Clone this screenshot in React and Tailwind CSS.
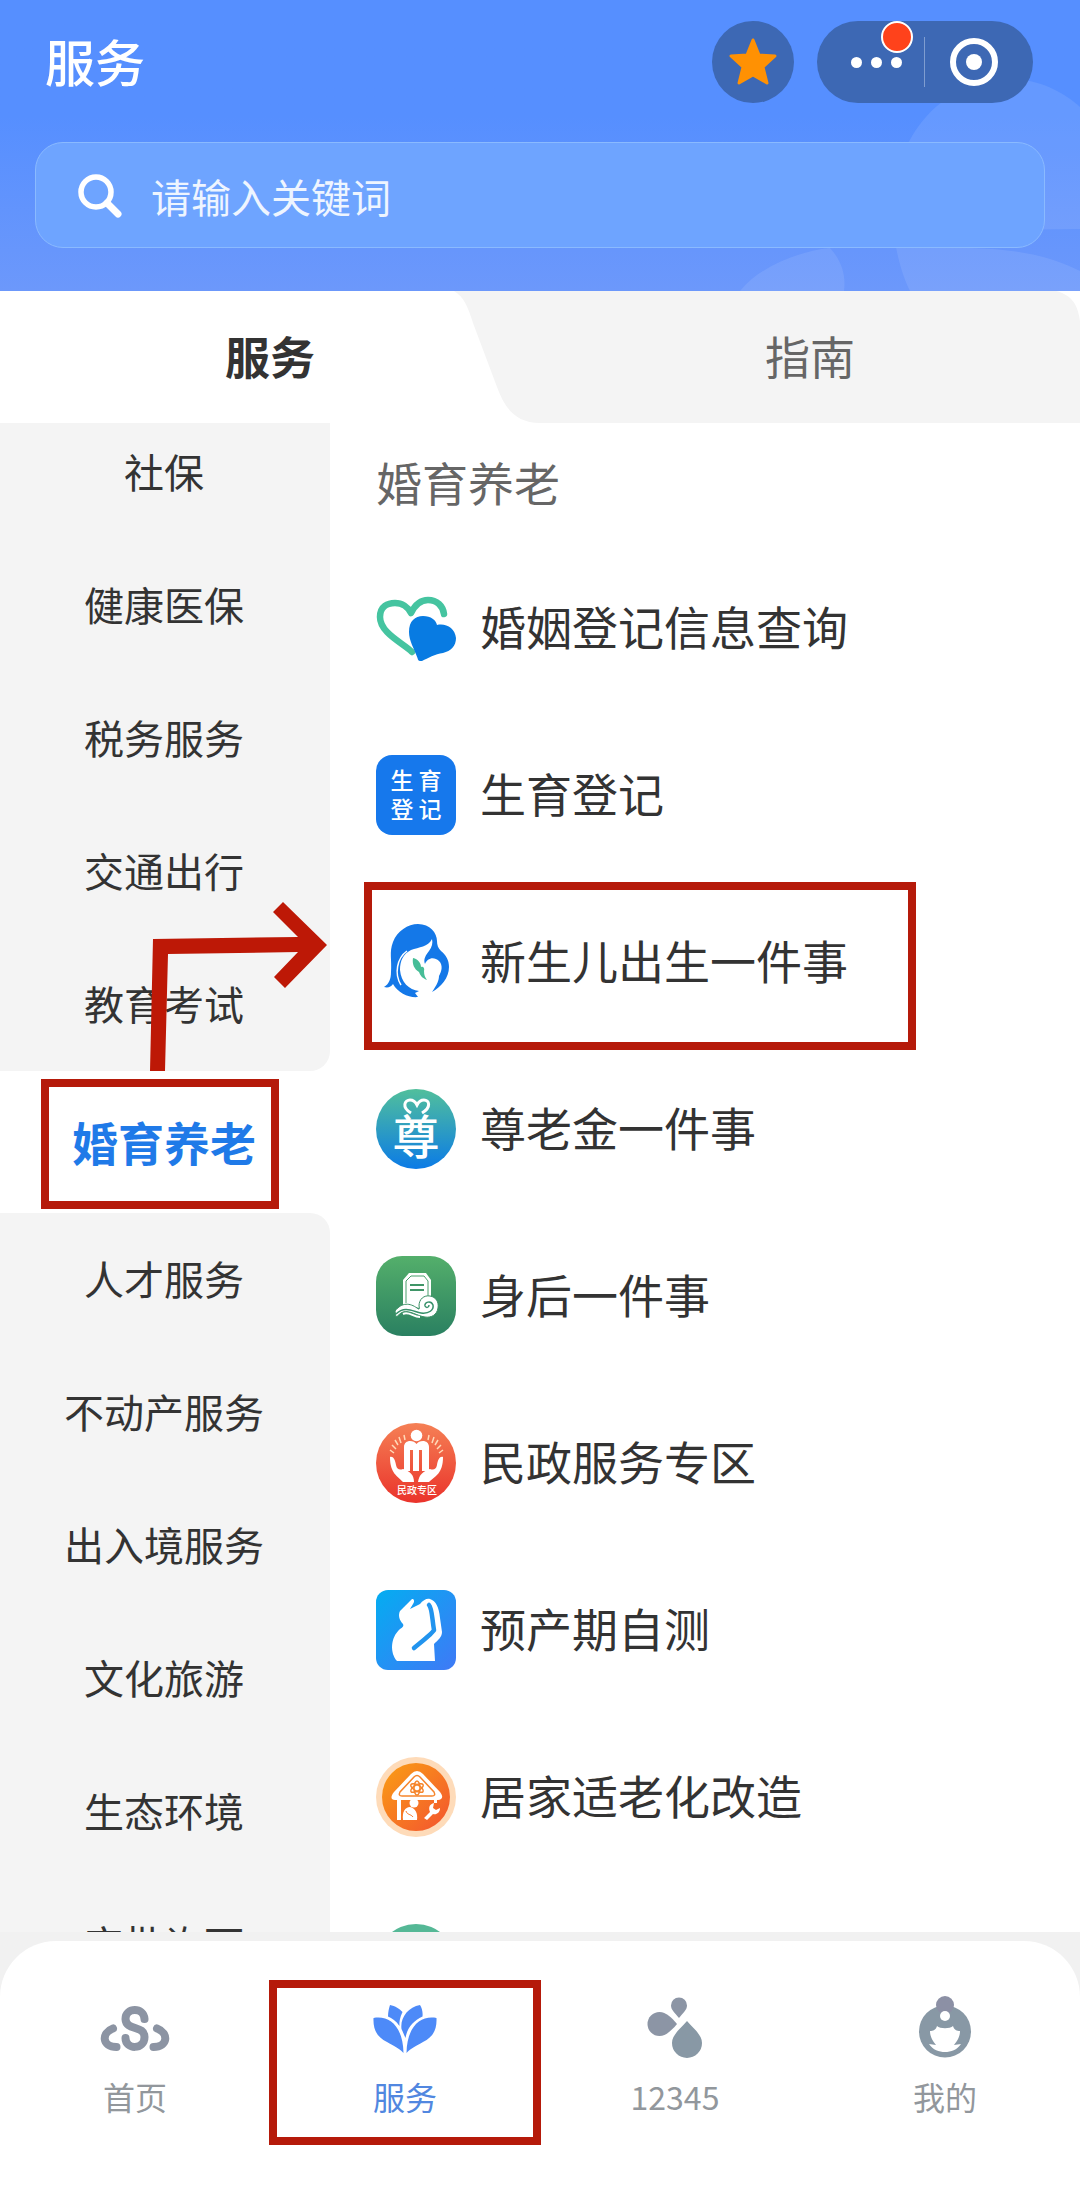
import React, { useState } from 'react';

const categories = [
  '社保',
  '健康医保',
  '税务服务',
  '交通出行',
  '教育考试',
  '婚育养老',
  '人才服务',
  '不动产服务',
  '出入境服务',
  '文化旅游',
  '生态环境',
  '审批许可',
];

const HeartsIcon = () => (
  <svg viewBox="0 0 80 80" className="size-20" fill="none" aria-hidden="true">
    <path
      d="M36 64 C27 55 4 45 4 29 C4 18 12 15 19 15 C26 15 32 19 35 25 C39 17 44 12 52 12 C61 12 67 18 68 26"
      stroke="#45c4a0"
      strokeWidth="6.500"
      strokeLinecap="round"
      strokeLinejoin="round"
    />
    <path
      d="M44 73 Q42 73 41.500 70 C38 60 33 53 33 44 C33 33 39 28 47 28 C55 28 60 32 61 37 C70 35 79 40 80 50 C80 58 75 63 67 65 C59 66 52 70 46 73 Z"
      fill="#087be2"
    />
  </svg>
);

const BirthRegisterIcon = () => (
  <span className="grid size-20 grid-cols-2 place-content-center rounded-2xl bg-[#1678ec] px-3 pb-0.5 text-center text-[23px] leading-[29px] font-medium text-white">
    <span>生</span>
    <span>育</span>
    <span>登</span>
    <span>记</span>
  </span>
);

const MotherIcon = () => (
  <svg viewBox="0 0 80 80" className="size-20" fill="none" aria-hidden="true">
    <path
      d="M42 2 C54 2 61 11 61 19 C61 23 62 26 65 29 C70 33 73 38 73 45 C73 56 65 65 56 70 C61 63 63 58 63 54 C66 49 67 43 63 39 C58 34 51 36 49 42 C47 37 50 33 53 29 C56 25 57 21 56 17 C52 25 43 25 35 28 C27 32 24 39 24 48 C25 60 33 68 43 69 L39 71 L42 75 C33 76 22 71 17 62 C15 65 12 66 8 65 C13 62 15 57 15 50 C16 38 13 30 17 20 C21 9 32 2 42 2 Z"
      fill="#1478e8"
    />
    <path d="M31 29 C21 36 18 52 25 63" stroke="#fff" strokeWidth="1.500" />
    <path
      d="M37 36 C42 37 45 41 45 45 C47 44 49 46 48 49 C48 53 49 55 51 58 C46 56 44 53 43 50 C38 47 36 42 37 36 Z"
      fill="#46bd97"
    />
  </svg>
);

const RespectIcon = () => (
  <svg viewBox="0 0 80 80" className="size-20" fill="none" aria-hidden="true">
    <defs>
      <linearGradient id="respect" x1="0" y1="0" x2="0" y2="1">
        <stop offset="0" stopColor="#51bf9c" />
        <stop offset="1" stopColor="#0b7be6" />
      </linearGradient>
    </defs>
    <circle cx="40" cy="40" r="40" fill="url(#respect)" />
    <path
      d="M35 24 C25 18 29 11 34 11 C38 11 40 14 41 16 C42 14 44 11 48 11 C53 11 56 18 46 24"
      stroke="#fff"
      strokeWidth="3"
    />
    <text x="40" y="65" textAnchor="middle" fontSize="47" fontWeight="500" fill="#fff">尊</text>
  </svg>
);

const MemorialIcon = () => (
  <svg viewBox="0 0 80 80" className="size-20" fill="none" aria-hidden="true">
    <defs>
      <linearGradient id="memorial" x1="0" y1="0" x2="0" y2="1">
        <stop offset="0" stopColor="#54af6b" />
        <stop offset="1" stopColor="#2a8061" />
      </linearGradient>
    </defs>
    <rect width="80" height="80" rx="26" fill="url(#memorial)" />
    <path d="M27 49 V24 L33 17 H50 L55 24 V40 L44 52 Z" fill="#fff" />
    <path d="M30 47 V25 L35 20 H48 L52 25 V42" stroke="#4a9f6d" strokeWidth="1" />
    <path d="M34 29 H48 M34 34 H48" stroke="#3f9567" strokeWidth="2" />
    <path
      d="M19 55 C26 46 34 47 41 52 C43 54 44 53 43 50 C43 43 48 39 54 40 C60 41 63 46 62 52 C61 59 55 62 49 61 C41 60 34 54 27 56 C24 57 22 60 20 61 Z"
      fill="#fff"
      stroke="#3a9065"
      strokeWidth="1"
    />
    <path
      d="M20 58 C29 49 38 56 45 57 C53 58 58 54 57 49 C55 44 48 46 49 50 C50 52 53 52 53 49"
      stroke="#37906a"
      strokeWidth="1.500"
    />
    <path d="M27 58 C33 55 37 61 44 61" stroke="#fff" strokeWidth="2" />
  </svg>
);

const CivilIcon = () => (
  <svg viewBox="0 0 80 80" className="size-20" fill="none" aria-hidden="true">
    <defs>
      <linearGradient id="civil" x1="0" y1="0" x2="0" y2="1">
        <stop offset="0" stopColor="#f58055" />
        <stop offset="1" stopColor="#ea332b" />
      </linearGradient>
    </defs>
    <circle cx="40" cy="40" r="40" fill="url(#civil)" />
    <circle cx="40.500" cy="12.500" r="5.800" fill="#fff" />
    <path
      d="M28 48 V24 C28 20 31 18 34 18 C37 18 39 19 40.500 21 C42 19 44 18 47 18 C50 18 53 20 53 24 V48 H46 V27 H43 V48 H37 V27 H34 V48 Z"
      fill="#fff"
    />
    <path
      d="M14 34 C17 33 19 36 20 42 C21 47 24 47 27 46 C34 48 38 52 38 59 H27 C22 53 14 51 14 34 Z M67 34 C64 33 62 36 61 42 C60 47 57 47 54 46 C47 48 43 52 42 59 H53 C59 53 67 51 67 34 Z"
      fill="#fff"
    />
    <path
      d="M25 20 L23 14 M22 22 L19 17 M20 26 L16 22 M18 30 L14 27 M29 17 L28 12 M56 20 L58 14 M59 22 L62 17 M61 26 L65 22 M63 30 L67 27 M52 17 L53 12"
      stroke="#ffd9b8"
      strokeWidth="1.500"
    />
    <text x="41" y="71" textAnchor="middle" fontSize="10" fontWeight="500" fill="#fff">民政专区</text>
  </svg>
);

const PregnancyIcon = () => (
  <svg viewBox="0 0 80 80" className="size-20" fill="none" aria-hidden="true">
    <defs>
      <linearGradient id="pregnancy" x1="0" y1="0" x2="1" y2="1">
        <stop offset="0" stopColor="#04adf1" />
        <stop offset="1" stopColor="#3f79f6" />
      </linearGradient>
    </defs>
    <rect width="80" height="80" rx="12" fill="url(#pregnancy)" />
    <path
      d="M36 9 C38 9 39 11 37 14 L34 19 L44 14 C47 10 51 8 54 9 C60 11 63 17 64 28 L66 42 C66 47 62 50 58 54 L59 71 H21 C14 63 14 48 24 39 C27 37 28 36 27 34 C23 30 22 25 24 21 Z"
      fill="#fff"
    />
    <path
      d="M53 15 C56 18 56 28 58 40 C57 43 44 53 38 58"
      stroke="#2294ee"
      strokeWidth="4.500"
      strokeLinecap="round"
      strokeLinejoin="round"
    />
  </svg>
);

const HomeCareIcon = () => (
  <svg viewBox="0 0 80 80" className="size-20" fill="none" aria-hidden="true">
    <defs>
      <linearGradient id="homecare" x1="0" y1="0" x2="1" y2="1">
        <stop offset="0" stopColor="#fa9f14" />
        <stop offset="1" stopColor="#f35330" />
      </linearGradient>
    </defs>
    <circle cx="40" cy="40" r="40" fill="#fedbb9" />
    <circle cx="40" cy="40" r="34" fill="url(#homecare)" />
    <path
      d="M35 17 Q41 11 47 17 L64 35 C68 40 66 43 62 43 H19 C15 43 14 40 18 35 Z"
      fill="#fff"
    />
    <path d="M21 40 H25 V63 H21 Z M58 42 H61 V46 H58 Z" fill="#fff" />
    <path d="M38 20 Q41 17 44 20 L58 35 Q60 39 56 39 H26 Q22 39 24 35 Z" stroke="#f6852b" strokeWidth="1.500" />
    <g stroke="#f6852b" strokeWidth="1.500">
      <ellipse cx="41" cy="31" rx="3" ry="7" />
      <ellipse cx="41" cy="31" rx="3" ry="7" transform="rotate(60 41 31)" />
      <ellipse cx="41" cy="31" rx="3" ry="7" transform="rotate(120 41 31)" />
    </g>
    <circle cx="38" cy="46" r="4.500" fill="#fff" />
    <path d="M27 63 C26 55 29 50 34 50 C39 51 42 56 41 63 Z" fill="#fff" />
    <path d="M30 54 C31 58 35 57 37 60" stroke="#f6782c" strokeWidth="1" />
    <path
      d="M48 61 L54 55 C52 50 54 47 58 46 L57 51 L60 53 L64 51 C64 56 60 58 57 57 L51 63 Z"
      fill="#fff"
    />
  </svg>
);

const services = [
  { name: '婚姻登记信息查询', icon: HeartsIcon },
  { name: '生育登记', icon: BirthRegisterIcon },
  { name: '新生儿出生一件事', icon: MotherIcon, marked: true },
  { name: '尊老金一件事', icon: RespectIcon },
  { name: '身后一件事', icon: MemorialIcon },
  { name: '民政服务专区', icon: CivilIcon },
  { name: '预产期自测', icon: PregnancyIcon },
  { name: '居家适老化改造', icon: HomeCareIcon },
];

const HomeNavIcon = () => (
  <svg viewBox="0 0 72 72" className="size-18" fill="none" aria-hidden="true">
    <g stroke="#8c94a3" strokeWidth="8" strokeLinecap="round">
      <path d="M45.500 27 C45 15 26.500 15 26.500 27 C27 39 45.500 33 45.500 45 C45.500 58 26.500 58 26.500 46" />
      <path d="M14 36.500 C2 41 3 55 17.500 55" />
      <path d="M58 36.500 C70 41 69 55 54.500 55" />
    </g>
  </svg>
);

const ServiceNavIcon = () => (
  <svg viewBox="0 0 72 72" className="size-18" fill="#4d8af8" aria-hidden="true">
    <path d="M4.500 26 C20 23 34 34 34.500 61 C30 56 25 54 18 50 C8 45 4 38 4.500 26 Z" />
    <path d="M67.500 26 C52 23 38 34 37.500 61 C42 56 47 54 54 50 C64 45 68 38 67.500 26 Z" />
    <path d="M21 13 C26 14 31 17 33.500 20 C31 25 30 30 30.500 34 C27 29 23 26 19 24.500 C19 20 20 16 21 13 Z" />
    <path d="M51 13 C53 16 54 20 53.500 24.500 C44 29 38 36 36.500 46 C35 43 34 40 32.500 37 C31 26 39 15 51 13 Z" />
  </svg>
);

const HotlineNavIcon = () => (
  <svg viewBox="0 0 72 72" className="size-18" fill="#8c95a5" aria-hidden="true">
    <path d="M40 26 C36 21 32 18 32 13.500 A8 8 0 0 1 48 13.500 C48 18 44 21 40 26 Z" />
    <path d="M38 32 C33 38 27 44 20.500 44 A12 12 0 0 1 20.500 20 C27 20 33 26 38 32 Z" />
    <path d="M48 29 C55 37 63 43 63 51 A15 15 0 0 1 33 51 C33 43 41 37 48 29 Z" fill="#8898a5" />
  </svg>
);

const MineNavIcon = () => (
  <svg viewBox="0 0 72 72" className="size-18" fill="none" aria-hidden="true">
    <circle cx="36" cy="39.500" r="26" fill="#8898a5" />
    <circle cx="36" cy="13" r="9" fill="#8c90a5" />
    <path
      d="M28 34 C31 37 41 37 44 34 C45 38 48 39 51 39 C51 45 48 49 45 53 L52 52 C48 58 42 60 36 60 C30 60 24 58 20 52 L27 53 C24 49 21 45 21 39 C24 39 27 38 28 34 Z"
      fill="#fff"
    />
    <circle cx="36" cy="24" r="5" fill="#fff" />
  </svg>
);

const navItems = [
  { name: '首页', icon: HomeNavIcon },
  { name: '服务', icon: ServiceNavIcon, active: true },
  { name: '12345', icon: HotlineNavIcon },
  { name: '我的', icon: MineNavIcon },
];

const Header = () => {
  const [keyword, setKeyword] = useState('');

  return (
    <header className="relative shrink-0 bg-linear-to-b from-[#568fff] from-40% to-[#6c98fb] px-[35px] pt-[21px] pb-[43px]">
      {/* Petals in the corner */}
      <svg viewBox="0 0 360 220" className="absolute right-0 bottom-0 w-[360px]" aria-hidden="true">
        <g fill="#fff" fillOpacity="0.09">
          <path d="M173 160 C165 70 220 8 290 8 C320 8 345 22 360 36 V158 Z" />
          <path d="M20 220 C40 195 80 180 110 177 C122 190 126 205 124 220 Z" />
          <path d="M173 130 C172 170 180 200 190 220 H360 V200 C320 180 280 178 250 177 Z" />
        </g>
      </svg>

      <div className="relative flex items-center">
        <h1 className="pb-1 pl-[10px] text-[50px] leading-[78px] font-medium text-white">服务</h1>
        <button
          type="button"
          aria-label="收藏"
          className="ml-auto flex size-[82px] items-center justify-center rounded-full bg-[#3d68b4]"
        >
          <svg viewBox="0 0 50 50" className="size-[50px]" aria-hidden="true">
            <path
              d="M25 3 L31 18 L47 19 L35 30 L39 46 L25 38 L11 46 L15 30 L3 19 L19 18 Z"
              fill="#ff9103"
              stroke="#ff9103"
              strokeWidth="3"
              strokeLinejoin="round"
            />
          </svg>
        </button>
        <div className="relative mr-3 ml-[23px] flex h-[82px] w-[216px] items-center rounded-full bg-[#3d68b4]">
          <button type="button" aria-label="更多" className="flex h-full w-[107px] items-center justify-center gap-[9px] pl-3">
            <span className="size-[11px] rounded-full bg-white"></span>
            <span className="size-[11px] rounded-full bg-white"></span>
            <span className="size-[11px] rounded-full bg-white"></span>
          </button>
          <span className="absolute top-0 left-16 size-8 rounded-full border-2 border-white bg-[#ff421b]"></span>
          <span className="h-[50px] w-px bg-[#7f9dd0]"></span>
          <button type="button" aria-label="关闭" className="flex h-full flex-1 items-center justify-center pr-[10px]">
            <span className="flex size-12 items-center justify-center rounded-full border-[6px] border-white">
              <span className="size-4 rounded-full bg-white"></span>
            </span>
          </button>
        </div>
      </div>

      {/* Search */}
      <form
        className="relative mt-[39px] flex h-[106px] items-center rounded-[28px] border border-[#8abaff] bg-[#6ea4ff] pt-0.5 pl-10"
        onSubmit={(e) => e.preventDefault()}
      >
        <label htmlFor="keyword" aria-label="搜索">
          <svg viewBox="0 0 48 48" className="size-12" fill="none" stroke="#fff" aria-hidden="true">
            <circle cx="20" cy="20" r="15" strokeWidth="5.500" />
            <path d="M31 31 L42 42" strokeWidth="7" strokeLinecap="round" />
          </svg>
        </label>
        <input
          id="keyword"
          type="text"
          value={keyword}
          onChange={(e) => setKeyword(e.target.value)}
          placeholder="请输入关键词"
          className="ml-[27px] h-full min-w-0 flex-1 bg-transparent text-[40px] text-white placeholder:text-[#eef5ff] focus:outline-none"
        />
      </form>
    </header>
  );
};

const App = () => {
  const [tab, setTab] = useState('services');
  const [category, setCategory] = useState('婚育养老');
  const activeIndex = categories.indexOf(category);

  return (
    <div className="flex h-screen flex-col overflow-hidden bg-white font-['Noto_Sans_CJK_SC',sans-serif] text-[#333]">
      <Header />

      {/* Tabs */}
      <div className="relative grid h-[132px] shrink-0 grid-cols-2 pb-0.5" role="tablist">
        <svg
          viewBox="0 0 1080 132"
          preserveAspectRatio="none"
          className={tab === 'services' ? 'absolute inset-0 size-full' : 'absolute inset-0 size-full -scale-x-100'}
          aria-hidden="true"
        >
          <path
            d="M454 0 C464 6 468 16 473 32 L497 96 C504 115 514 132 540 132 H1080 V30 C1078 14 1072 4 1056 0 Z"
            fill="#f4f4f4"
          />
        </svg>
        <button
          type="button"
          role="tab"
          aria-selected={tab === 'services'}
          onClick={() => setTab('services')}
          className={tab === 'services' ? 'relative text-[45px] font-bold' : 'relative text-[45px] text-[#666]'}
        >
          服务
        </button>
        <button
          type="button"
          role="tab"
          aria-selected={tab === 'guide'}
          onClick={() => setTab('guide')}
          className={tab === 'guide' ? 'relative text-[45px] font-bold' : 'relative text-[45px] text-[#666]'}
        >
          指南
        </button>
      </div>

      <main className="flex min-h-0 flex-1">
        {/* Categories */}
        <ul className="w-[330px] shrink-0 overflow-hidden">
          {categories.map((item, index) => {
            if (index === activeIndex) {
              return (
                <li key={item} className="relative h-[142px]">
                  <button type="button" className="size-full pr-0.5 pb-0.5 text-[46px] font-bold text-[#1f7ae8]">
                    {item}
                  </button>
                  <span className="pointer-events-none absolute top-2 left-[41px] h-[130px] w-[238px] border-8 border-[#b51a0a]"></span>
                  <svg
                    viewBox="0 0 180 172"
                    className="pointer-events-none absolute bottom-full left-[150px] z-10 w-[180px]"
                    fill="#bd1806"
                    aria-hidden="true"
                  >
                    <path d="M0 172 L3 40 L148 38 L123 13 L133 3 L177 46 L135 89 L124 78 L148 53 L18 55 L15 172 Z" />
                  </svg>
                </li>
              );
            }

            let corner = '';
            if (index === activeIndex - 1) corner = 'rounded-br-[20px]';
            if (index === activeIndex + 1) corner = 'rounded-tr-[20px]';

            return (
              <li key={item} className={`h-[133px] bg-[#f4f4f4] first:-mt-[17px] ${corner}`}>
                <button
                  type="button"
                  onClick={() => setCategory(item)}
                  className="size-full pr-0.5 pb-1 text-[40px]"
                >
                  {item}
                </button>
              </li>
            );
          })}
        </ul>

        {/* Services of the category */}
        <section className="min-w-0 flex-1 overflow-hidden pl-[46px]">
          <h2 className="pb-1 text-[46px] leading-[117px] text-[#666]">{category}</h2>
          <ul>
            {services.map((service) => (
              <li key={service.name} className="relative h-[167px]">
                <a href="#" className="flex h-full items-center gap-6 text-[46px] whitespace-nowrap">
                  <service.icon />
                  <span className="pb-1">{service.name}</span>
                </a>
                {service.marked && (
                  <span className="pointer-events-none absolute top-1 -left-3 h-[168px] w-[552px] border-8 border-[#b51a0a]"></span>
                )}
              </li>
            ))}
            <li className="flex h-[167px] items-center">
              <span className="size-20 rounded-full bg-[#55b896]"></span>
            </li>
          </ul>
        </section>
      </main>

      {/* Bottom navigation */}
      <nav className="shrink-0 bg-[#f1f1f1] pt-[9px]">
        <ul className="grid h-[255px] grid-cols-4 rounded-t-[56px] bg-white">
          {navItems.map((item) => (
            <li key={item.name} className="relative">
              <a
                href="#"
                className={
                  item.active
                    ? 'flex flex-col items-center pt-[51px] text-[#5187e0]'
                    : 'flex flex-col items-center pt-[51px] text-[#92979c]'
                }
              >
                <item.icon />
                <span className="mt-[10px] text-[32px] leading-[44px]">{item.name}</span>
              </a>
              {item.active && (
                <span className="pointer-events-none absolute -inset-x-px top-[39px] h-[165px] border-8 border-[#b51a0a]"></span>
              )}
            </li>
          ))}
        </ul>
      </nav>
    </div>
  );
};

export default App;
